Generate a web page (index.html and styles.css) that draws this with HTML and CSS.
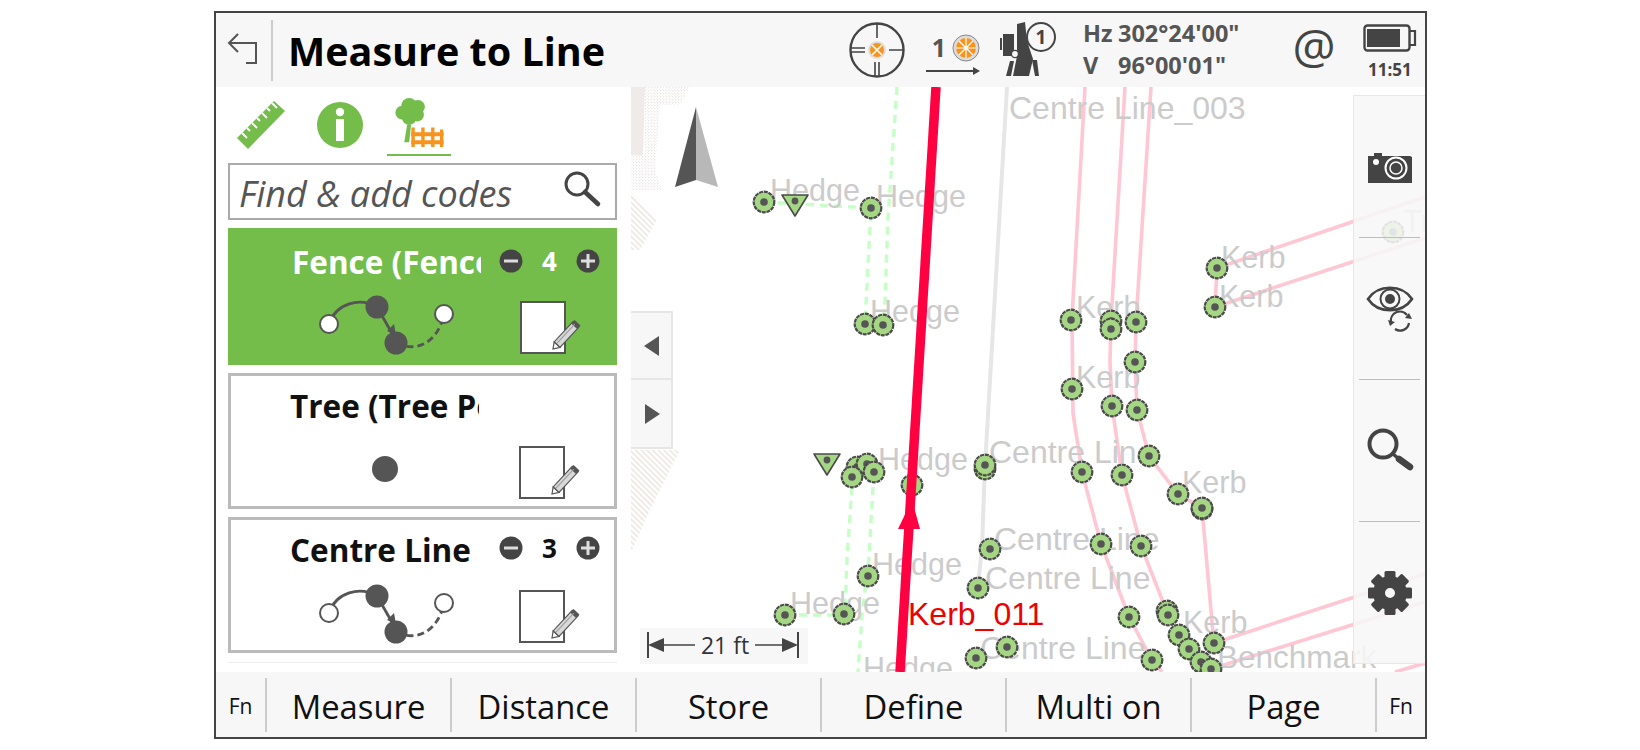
FILE: index.html
```html
<!DOCTYPE html>
<html lang="en">
<head>
<meta charset="utf-8">
<title>Measure to Line</title>
<link rel="stylesheet" href="styles.css">
</head>
<body>
<svg class="defs" width="0" height="0" aria-hidden="true">
  <defs>
    <g id="pt">
      <circle r="10.3" fill="#a5d683" stroke="#4a4a4a" stroke-width="2.2" stroke-dasharray="4 .8"/>
      <circle r="3.8" fill="#555"/>
    </g>
    <g id="tri">
      <path d="M-13 -9H13L0 12Z" fill="#a5d683" stroke="#4a4a4a" stroke-width="1.6" stroke-linejoin="round"/>
      <circle cy="-3" r="3.4" fill="#555"/>
    </g>
    <g id="pencil">
      <path d="M6 -4L0 0L6 4Z" fill="#fff" stroke="#555" stroke-width="1.2"/>
      <rect x="6" y="-4" width="28" height="8" fill="#d8d8d8" stroke="#555" stroke-width="1.2"/>
      <rect x="31" y="-4" width="5" height="8" fill="#555"/>
      <path d="M7 -1H33" stroke="#999" stroke-width="1"/>
    </g>
    <g id="seq">
      <path d="M13 35C20 14 44 8 61 18" fill="none" stroke="#555" stroke-width="2.8"/>
      <path d="M61 18L77 46" stroke="#555" stroke-width="2.8"/>
      <path d="M71 42L80 46L78 35Z" fill="#555"/>
      <path d="M80 54C100 64 122 54 128 25" fill="none" stroke="#555" stroke-width="2.8" stroke-dasharray="7 4"/>
      <circle cx="13" cy="35" r="9" fill="#fff" stroke="#555" stroke-width="2"/>
      <circle cx="61" cy="18" r="11.5" fill="#555"/>
      <circle cx="80" cy="54" r="11.5" fill="#555"/>
      <circle cx="128" cy="25" r="9" fill="#fff" stroke="#555" stroke-width="2"/>
    </g>
    <g id="note">
      <rect x="4" y="6" width="44" height="51" fill="#fff" stroke="#555" stroke-width="2"/>
      <use href="#pencil" transform="translate(36 53) rotate(-47)"/>
    </g>
    <pattern id="speck" width="3" height="3" patternUnits="userSpaceOnUse">
      <rect width="1.4" height="1.4" fill="#ddd7d4"/>
      <rect x="2" y="2" width="1" height="1" fill="#e8e3e0"/>
    </pattern>
    <pattern id="hatch" width="4" height="4" patternUnits="userSpaceOnUse" patternTransform="rotate(45)">
      <rect width="4" height="1.6" fill="#ece6df"/>
    </pattern>
  </defs>
</svg>

<div class="device">
  <header class="topbar">
    <div class="back">
      <svg width="30" height="34" viewBox="0 0 30 34"><path d="M11 1L2 10L11 19M2 10H29V30H19" fill="none" stroke="#555" stroke-width="2"/></svg>
    </div>
    <h1 class="title">Measure to Line</h1>
    <svg class="st-cross" width="56" height="56" viewBox="-28 -28 56 56">
      <circle r="26.5" fill="none" stroke="#444" stroke-width="2.4"/>
      <path d="M0 -26V-12M-26 -2H-12M-26 2H-12M12 0H26M-2 12V26M2 12V26" stroke="#444" stroke-width="1.6"/>
      <circle r="9" fill="#ddd"/><circle r="7" fill="#f7941e"/>
      <path d="M-5 -5L5 5M-5 5L5 -5" stroke="#fff" stroke-width="1.6"/>
    </svg>
    <svg class="st-prism" width="60" height="50" viewBox="0 0 60 50">
      <text class="st-one" x="17" y="28">1</text>
      <circle cx="44" cy="19" r="13" fill="#ddd" stroke="#888" stroke-width="1"/>
      <circle cx="44" cy="19" r="10" fill="#f7941e"/>
      <path d="M44 9V29M34 19H54M37 12L51 26M37 26L51 12" stroke="#fff" stroke-width="1.2"/>
      <path d="M4 42H54" stroke="#444" stroke-width="2"/>
      <path d="M51 38L58 42L51 46Z" fill="#444"/>
    </svg>
    <svg class="st-inst" width="60" height="58" viewBox="0 0 60 58">
      <path d="M18 3L26 1L28 20L34 38L30 55H14L18 35Z" fill="#444"/>
      <path d="M4 13H15V35H4ZM1 17H3V29H1Z" fill="#444"/>
      <path d="M33 39H38L40 55H36ZM11 40H15L12 55H7Z" fill="#444"/>
      <circle cx="16" cy="33" r="3.6" fill="#f7f7f7" stroke="#444" stroke-width="1.4"/>
      <circle cx="42" cy="16" r="14" fill="#f7f7f7" stroke="#444" stroke-width="2"/>
      <text class="st-circ" x="42" y="23">1</text>
    </svg>
    <div class="angles">
      <span>Hz</span><span>302°24'00"</span>
      <span>V</span><span>96°00'01"</span>
    </div>
    <div class="at">@</div>
    <div class="batt">
      <svg width="54" height="28" viewBox="0 0 54 28">
        <rect x="1.5" y="1.5" width="45" height="25" rx="3" fill="none" stroke="#444" stroke-width="2.4"/>
        <rect x="4" y="5" width="33" height="18" fill="#444"/>
        <path d="M47 7H52V21H47" fill="none" stroke="#444" stroke-width="2.2"/>
      </svg>
      <span>11:51</span>
    </div>
  </header>

  <div class="main">
    <aside class="side">
      <nav class="tabs">
        <div class="tab">
          <svg width="64" height="62" viewBox="0 0 64 62">
            <path d="M8 45L45 8L56 18L19 56Z" fill="#74bd4b"/>
            <path d="M13 40L18 45M18 35L21 38M23 30L28 35M28 25L31 28M33 20L38 25M38 15L41 18M43 10L48 15" stroke="#fff" stroke-width="1.8"/>
          </svg>
        </div>
        <div class="tab">
          <svg width="64" height="62" viewBox="0 0 64 62">
            <circle cx="32" cy="32" r="23" fill="#74bd4b"/>
            <circle cx="32" cy="19" r="4.2" fill="#fff"/>
            <rect x="28" y="26" width="8" height="22" fill="#fff"/>
          </svg>
        </div>
        <div class="tab tab-on">
          <svg width="64" height="62" viewBox="0 0 64 62">
            <path d="M20 32L24 32L22 50L17 50Z" fill="#74bd4b"/>
            <g fill="#74bd4b">
              <circle cx="22" cy="13" r="8"/><circle cx="31" cy="14" r="7"/><circle cx="15" cy="20" r="7"/>
              <circle cx="30" cy="22" r="7"/><circle cx="22" cy="25" r="7.5"/>
            </g>
            <path d="M26 55V35M36 55V35M46 55V35M55 55V37" fill="none" stroke="#f7941e" stroke-width="3.4"/>
            <path d="M24 42H57M24 50H57" fill="none" stroke="#f7941e" stroke-width="4"/>
          </svg>
        </div>
      </nav>
      <div class="search">
        <span>Find &amp; add codes</span>
        <svg width="40" height="40" viewBox="0 0 40 40">
          <circle cx="15" cy="15" r="11" fill="none" stroke="#444" stroke-width="3"/>
          <path d="M23 23L36 35" stroke="#444" stroke-width="4.6" stroke-linecap="round"/>
        </svg>
      </div>

      <article class="card card-on">
        <div class="card-top">
          <div class="card-title">Fence (Fence)</div>
          <div class="count">
            <svg width="24" height="24" viewBox="0 0 24 24"><circle cx="12" cy="12" r="11.5" fill="#444"/><path d="M5 12H19" stroke="#ddd" stroke-width="3"/></svg>
            <b>4</b>
            <svg width="24" height="24" viewBox="0 0 24 24"><circle cx="12" cy="12" r="11.5" fill="#444"/><path d="M5 12H19M12 5V19" stroke="#ddd" stroke-width="3"/></svg>
          </div>
        </div>
        <div class="card-body">
          <svg width="150" height="70" viewBox="0 0 150 70"><use href="#seq"/></svg>
          <svg width="70" height="64" viewBox="0 0 70 64"><use href="#note"/></svg>
        </div>
      </article>

      <article class="card">
        <div class="card-top">
          <div class="card-title">Tree (Tree Point)</div>
        </div>
        <div class="card-body">
          <svg width="150" height="70" viewBox="0 0 150 70"><circle cx="69" cy="35" r="13" fill="#555"/></svg>
          <svg width="70" height="64" viewBox="0 0 70 64"><use href="#note"/></svg>
        </div>
      </article>

      <article class="card">
        <div class="card-top">
          <div class="card-title">Centre Line</div>
          <div class="count">
            <svg width="24" height="24" viewBox="0 0 24 24"><circle cx="12" cy="12" r="11.5" fill="#444"/><path d="M5 12H19" stroke="#ddd" stroke-width="3"/></svg>
            <b>3</b>
            <svg width="24" height="24" viewBox="0 0 24 24"><circle cx="12" cy="12" r="11.5" fill="#444"/><path d="M5 12H19M12 5V19" stroke="#ddd" stroke-width="3"/></svg>
          </div>
        </div>
        <div class="card-body">
          <svg width="150" height="70" viewBox="0 0 150 70"><use href="#seq"/></svg>
          <svg width="70" height="64" viewBox="0 0 70 64"><use href="#note"/></svg>
        </div>
      </article>
      <div class="side-end"></div>
    </aside>

    <section class="map">
      <svg class="map-canvas" width="794" height="585" viewBox="631 87 794 585">
        <!-- point cloud -->
        <path d="M631 87H645L643 155H631Z" fill="#f0ebe9"/>
        <path d="M645 87H690L680 105H660L655 170L662 190H631V155H645Z" fill="url(#speck)" opacity=".6"/>
        <path d="M631 192L657 220L640 250H631Z" fill="url(#hatch)"/>
        <path d="M631 450H680L650 510L631 552Z" fill="url(#hatch)"/>

        <!-- centre line -->
        <path class="l-grey" d="M1007 87L988 415L985 465L982 548L978 585"/>
        <!-- hedges -->
        <g class="l-green">
          <path d="M764 202L871 208L865 324"/>
          <path d="M897 87L888 218L885 302L883 325"/>
          <path d="M852 487L847 558L845 614"/>
          <path d="M873 487L869 558L862 615L858 672"/>
          <path d="M785 615H844"/>
        </g>
        <!-- kerbs -->
        <g class="l-pink">
          <path d="M1085 87L1072 318L1073 413L1082 472L1101 544L1129 617L1152 660L1162 672"/>
          <path d="M1125 87L1111 321L1110 362L1112 406L1122 475L1141 546L1167 612L1179 635L1189 649L1201 662L1211 669"/>
          <path d="M1151 87L1136 322L1135 362L1137 410L1149 456L1178 494L1202 508L1212 622L1214 643"/>
          <path d="M1425 197L1217 268L1215 307L1425 238"/>
          <path d="M1214 643L1425 574"/>
          <path d="M1211 669L1425 602"/>
          <path d="M1395 672L1425 663"/>
        </g>

        <g class="lbl">
          <text class="lbl-c" x="1009" y="119">Centre Line_003</text>
          <text x="770" y="201">Hedge</text>
          <text x="876" y="207">Hedge</text>
          <text x="870" y="322">Hedge</text>
          <text x="878" y="470">Hedge</text>
          <text x="872" y="575">Hedge</text>
          <text x="790" y="614">Hedge</text>
          <text x="863" y="679">Hedge</text>
          <text x="1221" y="268">Kerb</text>
          <text x="1219" y="307">Kerb</text>
          <text x="1076" y="318">Kerb</text>
          <text x="1076" y="388">Kerb</text>
          <text x="1182" y="493">Kerb</text>
          <text x="1183" y="633">Kerb</text>
          <text class="lbl-c" x="989" y="463">Centre Line</text>
          <text class="lbl-c" x="994" y="550">Centre Line</text>
          <text class="lbl-c" x="985" y="589">Centre Line</text>
          <text class="lbl-c" x="980" y="659">Centre Line</text>
          <text class="lbl-b" x="1217" y="668">Benchmark</text>
          <text x="1403" y="232">Tr</text>
        </g>

        <use href="#pt" x="764" y="202"/><use href="#pt" x="871" y="208"/><use href="#pt" x="865" y="324"/><use href="#pt" x="883" y="325"/>
        <use href="#tri" x="795" y="204"/><use href="#tri" x="827" y="463"/>
        <use href="#pt" x="1217" y="268"/><use href="#pt" x="1215" y="307"/><use href="#pt" x="1071" y="320"/>
        <use href="#pt" x="1111" y="321"/><use href="#pt" x="1111" y="329"/><use href="#pt" x="1136" y="322"/>
        <use href="#pt" x="1135" y="362"/><use href="#pt" x="1072" y="389"/><use href="#pt" x="1112" y="406"/><use href="#pt" x="1137" y="410"/>
        <use href="#pt" x="1393" y="232"/>
        <use href="#pt" x="857" y="467"/><use href="#pt" x="867" y="464"/><use href="#pt" x="852" y="477"/><use href="#pt" x="874" y="472"/>
        <use href="#pt" x="912" y="485"/><use href="#pt" x="985" y="469"/><use href="#pt" x="985" y="465"/>
        <use href="#pt" x="990" y="549"/><use href="#pt" x="978" y="588"/><use href="#pt" x="1007" y="647"/><use href="#pt" x="976" y="658"/>
        <use href="#pt" x="868" y="576"/><use href="#pt" x="785" y="615"/><use href="#pt" x="844" y="614"/>
        <use href="#pt" x="1149" y="456"/><use href="#pt" x="1082" y="472"/><use href="#pt" x="1122" y="475"/>
        <use href="#pt" x="1178" y="494"/><use href="#pt" x="1202" y="509"/><use href="#pt" x="1202" y="508"/>
        <use href="#pt" x="1101" y="544"/><use href="#pt" x="1141" y="546"/><use href="#pt" x="1129" y="617"/>
        <use href="#pt" x="1167" y="611"/><use href="#pt" x="1168" y="615"/><use href="#pt" x="1179" y="635"/><use href="#pt" x="1189" y="649"/>
        <use href="#pt" x="1214" y="643"/><use href="#pt" x="1152" y="660"/><use href="#pt" x="1201" y="662"/><use href="#pt" x="1211" y="669"/>

        <!-- active line -->
        <path d="M936 87L900 672" stroke="#ff0040" stroke-width="9.5" fill="none"/>
        <path d="M912 500L898 529H920Z" fill="#ff0040"/>
        <text class="lbl-red" x="908" y="625">Kerb_011</text>

        <!-- north arrow -->
        <path d="M696 107L675 187L696 180Z" fill="#555"/>
        <path d="M696 107L718 187L696 180Z" fill="#b8b8b8"/>
      </svg>

      <div class="pan">
        <button class="pan-btn" aria-label="Left"><svg width="16" height="20" viewBox="0 0 16 20"><path d="M15 0V20L0 10Z" fill="#555"/></svg></button>
        <button class="pan-btn" aria-label="Right"><svg width="16" height="20" viewBox="0 0 16 20"><path d="M1 0V20L16 10Z" fill="#555"/></svg></button>
      </div>

      <div class="scale">
        <svg width="168" height="36" viewBox="0 0 168 36">
          <path d="M8 4V30M158 4V30" stroke="#444" stroke-width="2"/>
          <path d="M8 17L24 10V24Z M158 17L142 10V24Z" fill="#444"/>
          <path d="M24 17H55M115 17H142" stroke="#444" stroke-width="1.4"/>
          <text class="scale-txt" x="85" y="26">21 ft</text>
        </svg>
      </div>

      <div class="rail">
        <div class="rail-item">
          <svg width="48" height="34" viewBox="0 0 48 34">
            <path d="M2 6H8V3H16V6H44L46 7V33H2Z" fill="#444"/>
            <circle cx="30" cy="18" r="10.5" fill="none" stroke="#fff" stroke-width="2"/>
            <circle cx="30" cy="18" r="6" fill="none" stroke="#fff" stroke-width="1.5"/>
            <circle cx="10" cy="12" r="3" fill="#fff"/>
          </svg>
        </div>
        <div class="rail-sep"></div>
        <div class="rail-item">
          <svg width="48" height="50" viewBox="0 0 48 50">
            <path d="M2 15C12 0 36 0 46 15C36 30 12 30 2 15Z" fill="none" stroke="#444" stroke-width="2.6"/>
            <circle cx="24" cy="15" r="9.5" fill="none" stroke="#444" stroke-width="2"/>
            <circle cx="24" cy="15" r="5" fill="#444"/>
            <path d="M25 38A9 9 0 0 1 41 31M43 39A9 9 0 0 1 29 45" fill="none" stroke="#444" stroke-width="2.2"/>
            <path d="M22 36L29 38L24 42ZM46 35L39 34L43 29Z" fill="#444"/>
          </svg>
        </div>
        <div class="rail-sep"></div>
        <div class="rail-item">
          <svg width="48" height="48" viewBox="0 0 48 48">
            <circle cx="17" cy="17" r="13.5" fill="none" stroke="#444" stroke-width="4"/>
            <path d="M27 27L33 32" stroke="#444" stroke-width="3.5"/>
            <path d="M33 32L44 40" stroke="#444" stroke-width="6.5" stroke-linecap="round"/>
          </svg>
        </div>
        <div class="rail-sep"></div>
        <div class="rail-item">
          <svg width="48" height="48" viewBox="-24 -24 48 48">
            <circle r="11" fill="none" stroke="#444" stroke-width="12"/>
            <g fill="#444">
              <rect x="-5.5" y="-22" width="11" height="9" rx="1.5"/>
              <rect x="-5.5" y="-22" width="11" height="9" rx="1.5" transform="rotate(45)"/>
              <rect x="-5.5" y="-22" width="11" height="9" rx="1.5" transform="rotate(90)"/>
              <rect x="-5.5" y="-22" width="11" height="9" rx="1.5" transform="rotate(135)"/>
              <rect x="-5.5" y="-22" width="11" height="9" rx="1.5" transform="rotate(180)"/>
              <rect x="-5.5" y="-22" width="11" height="9" rx="1.5" transform="rotate(225)"/>
              <rect x="-5.5" y="-22" width="11" height="9" rx="1.5" transform="rotate(270)"/>
              <rect x="-5.5" y="-22" width="11" height="9" rx="1.5" transform="rotate(315)"/>
            </g>
          </svg>
        </div>
      </div>
    </section>
  </div>

  <footer class="softkeys">
    <div class="key key-fn">Fn</div>
    <div class="key">Measure</div>
    <div class="key">Distance</div>
    <div class="key">Store</div>
    <div class="key">Define</div>
    <div class="key">Multi on</div>
    <div class="key">Page</div>
    <div class="key key-fn">Fn</div>
  </footer>
</div>
</body>
</html>
```
FILE: styles.css
```css
* { box-sizing: border-box; }
html, body { margin: 0; padding: 0; background: #fff; }
body { width: 1640px; height: 750px; overflow: hidden; font-family: "Open Sans", "Noto Sans", sans-serif; color: #111; }
.defs { display: block; height: 0; }

.device {
  width: 1213px; height: 728px; margin: 11px 0 0 214px;
  border: 2px solid #444; display: flex; flex-direction: column; background: #fff;
}

/* top bar */
.topbar { height: 74px; background: #f7f7f7; display: flex; align-items: center; flex: none; }
.back { width: 57px; height: 61px; border-right: 2px solid #ccc; display: flex; align-items: center; padding-left: 11px; flex: none; }
.title { margin: 4px 0 0 15px; width: 561px; flex: none; font-size: 39.5px; font-weight: 700; color: #000; white-space: nowrap; line-height: 1; }
.st-cross { flex: none; }
.st-prism { margin-left: 17px; margin-top: 8px; flex: none; }
.st-inst { margin-left: 17px; flex: none; }
.st-one { font: 700 25px "Open Sans", sans-serif; fill: #555; text-anchor: middle; }
.st-circ { font: 700 19px "Open Sans", sans-serif; fill: #444; text-anchor: middle; }
.angles {
  margin-left: 24px; width: 192px; flex: none; display: grid; grid-template-columns: 35px auto; grid-auto-rows: 32px;
  justify-content: start; font-size: 23.5px; font-weight: 700; color: #555; line-height: 32px; margin-top: -2px; white-space: nowrap;
}
.at { width: 78px; flex: none; font-size: 48px; line-height: 1; color: #444; text-align: center; margin-top: -8px; }
.batt { margin-left: 10px; width: 60px; flex: none; display: flex; flex-direction: column; color: #444; font-size: 17px; font-weight: 700; line-height: 20px; margin-top: 4px; }
.batt svg { display: block; }
.batt span { padding-left: 5px; margin-top: 8px; }

/* main */
.main { flex: 1; display: flex; min-height: 0; }

.side { width: 415px; flex: none; padding: 0 14px 0 12px; display: flex; flex-direction: column; }
.tabs { height: 76px; padding: 6px 0 0 0; margin-left: -7px; display: flex; flex: none; }
.tab { width: 79px; display: flex; justify-content: center; }
.tab svg { display: block; }
.tab-on svg { border-bottom: 2px solid #74bd4b; height: 63px; }

.search {
  height: 57px; border: 2px solid #aaa; background: #fff; flex: none; display: flex; align-items: center;
  justify-content: space-between; padding: 3px 13px 0 9px; font-size: 36px; font-style: italic; color: #555; margin-bottom: 8px;
}
.search svg { margin-top: -9px; }
.card { height: 136px; border: 3px solid #bbb; background: #fff; flex: none; margin-bottom: 8px; }
.card-on { height: 137px; background: #74bd4b; border-color: #74bd4b; color: #fff; }
.card-top { height: 57px; padding-left: 59px; display: flex; align-items: flex-start; }
.card-on .card-top { padding-left: 61px; }
.card-title { width: 189px; height: 42px; margin-top: 9px; overflow: hidden; white-space: nowrap; font-size: 31.5px; font-weight: 700; line-height: 42px; }
.card-on .card-title { margin-top: 10px; }
.count { margin: 16px 0 0 20px; width: 101px; flex: none; display: flex; justify-content: space-between; align-items: center; font-size: 26px; line-height: 24px; }
.count svg { flex: none; }
.card-on .count { margin: 18px 0 0 18px; }
.card-on .count b { color: #fff; }
.card-body { display: flex; align-items: flex-start; padding-left: 85px; }
.card-body svg:first-child { margin-top: 1px; }
.card-body svg:last-child { margin: 8px 0 0 50px; }
.card-on .card-body svg:last-child { margin-left: 51px; }
.side-end { height: 1px; background: #eee; margin-top: 1px; }

/* map */
.map { position: relative; flex: 1; overflow: hidden; background: #fff; }
.map-canvas { display: block; }
.l-grey { fill: none; stroke: #e6e6e6; stroke-width: 4; }
.l-green path { fill: none; stroke: #c5ffc5; stroke-width: 3.4; stroke-dasharray: 8 6; }
.l-pink path { fill: none; stroke: #ffc6d3; stroke-width: 3.6; }
.lbl text { font: 30.5px "Liberation Sans", sans-serif; fill: #cbcbcb; }
.lbl .lbl-c { font-size: 32px; }
.lbl .lbl-b { font-size: 31.5px; }
.lbl-red { font: 32px "Liberation Sans", sans-serif; fill: #ee0000; }
.scale-txt { font: 23px "Open Sans", sans-serif; fill: #333; text-anchor: middle; }

.pan { position: absolute; left: 0; top: 224px; width: 42px; display: flex; flex-direction: column; }
.pan-btn { height: 69px; padding: 0 0 0 13px; margin: 0; background: #f7f7f7; border: 2px solid #e6e6e6; border-left: 0; display: flex; align-items: center; }
.pan-btn + .pan-btn { border-top: 0; }

.scale { position: absolute; left: 9px; top: 541px; width: 168px; height: 36px; background: #f7f7f7; }
.scale svg { display: block; }

.rail {
  position: absolute; right: 0; top: 8px; width: 72px; height: 569px;
  background: rgba(247, 247, 247, .88); border: 1px solid #e8e8e8; border-right: 0;
  display: flex; flex-direction: column;
}
.rail-item { flex: 1; display: flex; align-items: center; justify-content: center; }
.rail-sep { height: 1px; margin: 0 5px; background: #bdbdbd; flex: none; }

/* soft keys */
.softkeys { height: 65px; background: #f7f7f7; flex: none; display: flex; align-items: center; }
.key { width: 185px; height: 54px; flex: none; display: flex; align-items: center; justify-content: center; padding-top: 3px; font-size: 32.8px; color: #111; border-left: 2px solid #ccc; }
.key-fn { width: 49px; font-size: 21px; border-left: 0; }
.key-fn:last-child { flex: 1; border-left: 2px solid #ccc; }
```
